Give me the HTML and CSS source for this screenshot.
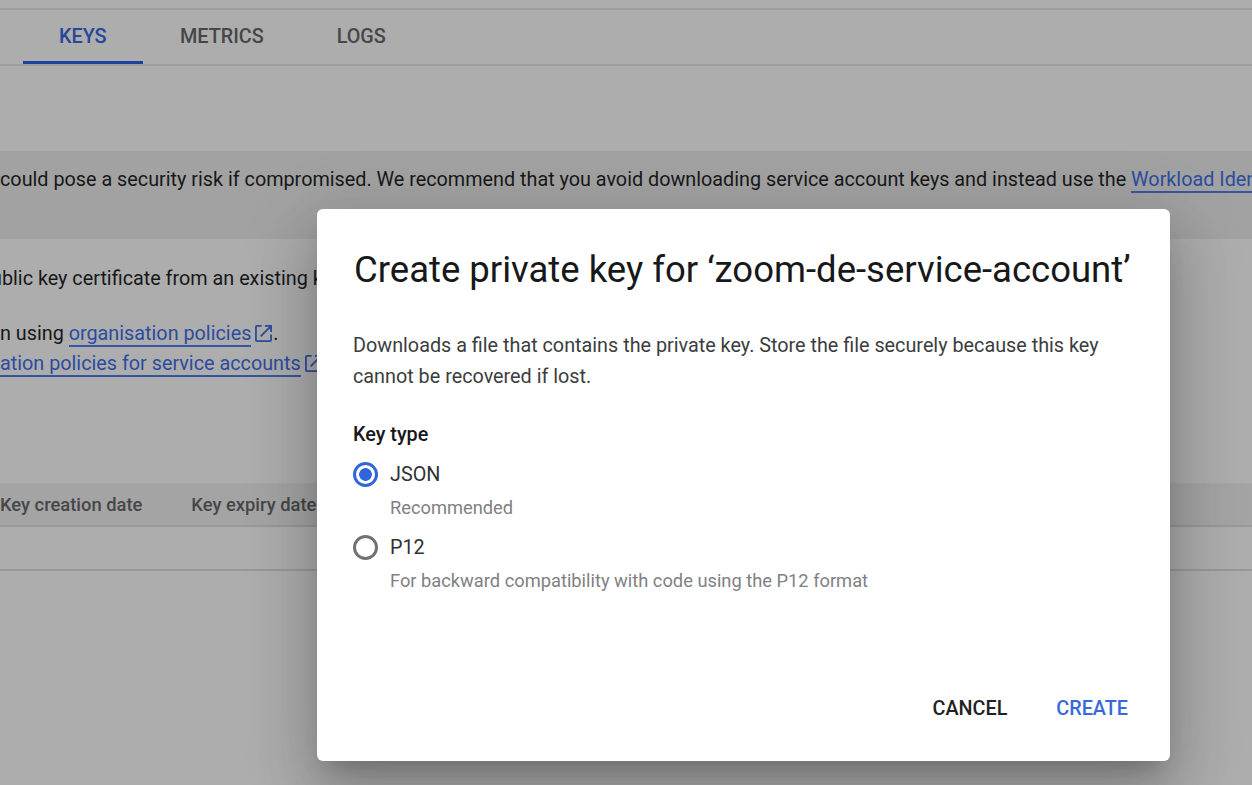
FILE: index.html
```html
<!DOCTYPE html>
<html lang="en">
<head>
<meta charset="utf-8">
<title>Service account keys</title>
<link rel="stylesheet" href="styles.css">
</head>
<body>
<main class="page">
  <nav class="tabs">
    <a class="tab tab-active">KEYS</a>
    <a class="tab">METRICS</a>
    <a class="tab">LOGS</a>
  </nav>
  <section class="banner">could pose a security risk if compromised. We recommend that you avoid downloading service account keys and instead use the <a class="link">Workload Iden</a></section>
  <section class="info">
    <p class="certificate">ublic key certificate from an existing k</p>
    <p class="policy"><span>n using <a class="link">organisation policies</a></span><svg class="external" viewBox="0 0 18 18"><path d="M7 1H2.2Q1 1 1 2.2v13.6Q1 17 2.2 17h13.6q1.2 0 1.2-1.2V10M10.5 1H17v6.5M17 1 6 12"/></svg><span>.</span></p>
    <p class="policy"><a class="link">ation policies for service accounts</a><svg class="external" viewBox="0 0 18 18"><path d="M7 1H2.2Q1 1 1 2.2v13.6Q1 17 2.2 17h13.6q1.2 0 1.2-1.2V10M10.5 1H17v6.5M17 1 6 12"/></svg></p>
  </section>
  <section class="table">
    <div class="table-head"><span>Key creation date</span><span>Key expiry date</span></div>
    <div class="table-row"></div>
  </section>
</main>
<div class="dialog" role="dialog">
  <h1 class="title">Create private key for ‘zoom-de-service-account’</h1>
  <p class="description">Downloads a file that contains the private key. Store the file securely because this key<br>cannot be recovered if lost.</p>
  <h2 class="label">Key type</h2>
  <div class="option">
    <span class="radio radio-on"></span>
    <div><div class="name">JSON</div><div class="hint">Recommended</div></div>
  </div>
  <div class="option">
    <span class="radio"></span>
    <div><div class="name">P12</div><div class="hint">For backward compatibility with code using the P12 format</div></div>
  </div>
  <div class="actions"><button class="button">CANCEL</button><button class="button primary">CREATE</button></div>
</div>
</body>
</html>
```
FILE: styles.css
```css
* { box-sizing: border-box; }
body {
  margin: 0;
  height: 785px;
  overflow: hidden;
  background: #adadad;
  font: 400 19.8px/30px Roboto, "Liberation Sans", sans-serif;
  color: #171819;
}
p, h1, h2 { margin: 0; }
.page { height: 785px; padding-top: 8px; overflow: hidden; white-space: nowrap; }
.tabs {
  display: flex;
  height: 58px;
  padding-left: 23px;
  border-top: 2px solid #9f9f9f;
  border-bottom: 2px solid #9f9f9f;
}
.tab { padding: 12px 36px 0; height: 54px; font-weight: 500; color: #454749; }
.tab + .tab { padding-left: 37px; }
.tab-active { width: 120px; color: #27479a; border-bottom: 3px solid #1e429b; }
.banner { height: 88px; margin-top: 85px; padding-top: 14px; background: #a2a2a2; }
.link { color: #2c4c9f; border-bottom: 2px solid #3656a4; }
.policy > .link { height: 28px; }
.info { height: 244px; padding-top: 25px; }
.certificate { height: 55px; margin-left: -9px; }
.policy { display: flex; height: 30px; }
.external { width: 17px; height: 17px; margin: 6px 1px 0 4px; flex: none; fill: none; stroke: #2c4c9f; stroke-width: 1.9; }
.table-head {
  display: flex;
  gap: 49px;
  height: 44px;
  padding-top: 7px;
  background: #a4a4a4;
  border-bottom: 2px solid #989898;
  font-size: 18.35px;
  font-weight: 500;
  color: #454749;
}
.table-row { height: 44px; border-bottom: 2px solid #989898; }
.dialog {
  position: absolute;
  left: 317px;
  top: 209px;
  width: 853px;
  height: 552px;
  padding: 36px;
  background: #fff;
  border-radius: 6px;
  white-space: nowrap;
  box-shadow: 0 17px 23px -11px rgba(0,0,0,.2), 0 37px 58px 5px rgba(0,0,0,.14), 0 14px 70px 12px rgba(0,0,0,.12);
}
.title { height: 86px; padding-left: 1px; font-size: 36.5px; line-height: 49px; font-weight: 400; color: #171819; }
.description { height: 86px; line-height: 30.5px; color: #3b3d3f; }
.label { height: 40px; padding-top: 3px; font-size: 19.8px; line-height: 30px; font-weight: 500; }
.option { display: flex; gap: 12px; height: 73px; padding-top: 3px; }
.radio { flex: none; width: 25px; height: 25px; margin-top: 2px; border: 3px solid #707173; border-radius: 50%; }
.radio-on { border-color: #2f66dc; background: radial-gradient(circle, #2f66dc 6px, #fff 6.7px); }
.name { height: 33px; color: #303234; }
.hint { font-size: 18.3px; color: #808183; }
.actions { display: flex; justify-content: flex-end; gap: 49px; padding: 91px 6px 0 0; }
.button { padding: 0; border: 0; background: none; font: inherit; font-weight: 500; color: #202124; }
.primary { color: #3769db; }
```
